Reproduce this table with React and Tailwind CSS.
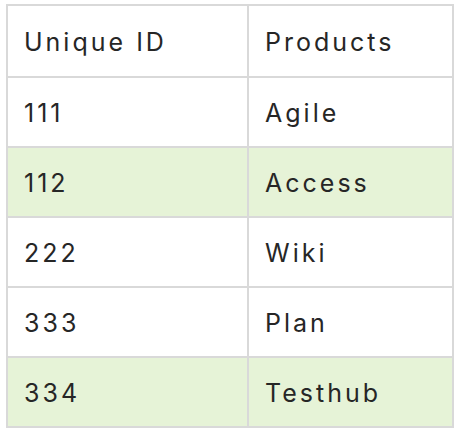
const rows = [
  { id: '111', name: 'Agile', hl: false },
  { id: '112', name: 'Access', hl: true },
  { id: '222', name: 'Wiki', hl: false },
  { id: '333', name: 'Plan', hl: false },
  { id: '334', name: 'Testhub', hl: true },
];

export default function App() {
  return (
    <div className="bg-white w-[458px] h-[432px] pt-[4px] pl-[6px] font-['Inter',sans-serif] text-[#262626] text-[25px] tracking-[3px]">
      <table className="border-collapse border-2 border-[#d9d9d9] w-[448px] table-fixed">
        <colgroup>
          <col className="w-[241px]" />
          <col />
        </colgroup>
        <thead>
          <tr className="h-[72px]">
            <th className="border-2 border-[#d9d9d9] text-left font-normal pl-[16px] pt-[3px]">Unique ID</th>
            <th className="border-2 border-[#d9d9d9] text-left font-normal pl-[16px] pt-[3px]">Products</th>
          </tr>
        </thead>
        <tbody>
          {rows.map((r) => (
            <tr key={r.id} className={r.hl ? 'h-[70px] bg-[#e6f3d7]' : 'h-[70px]'}>
              <td className="border-2 border-[#d9d9d9] pl-[16px] pt-[3px]">{r.id}</td>
              <td className="border-2 border-[#d9d9d9] pl-[16px] pt-[3px]">{r.name}</td>
            </tr>
          ))}
        </tbody>
      </table>
    </div>
  );
}
